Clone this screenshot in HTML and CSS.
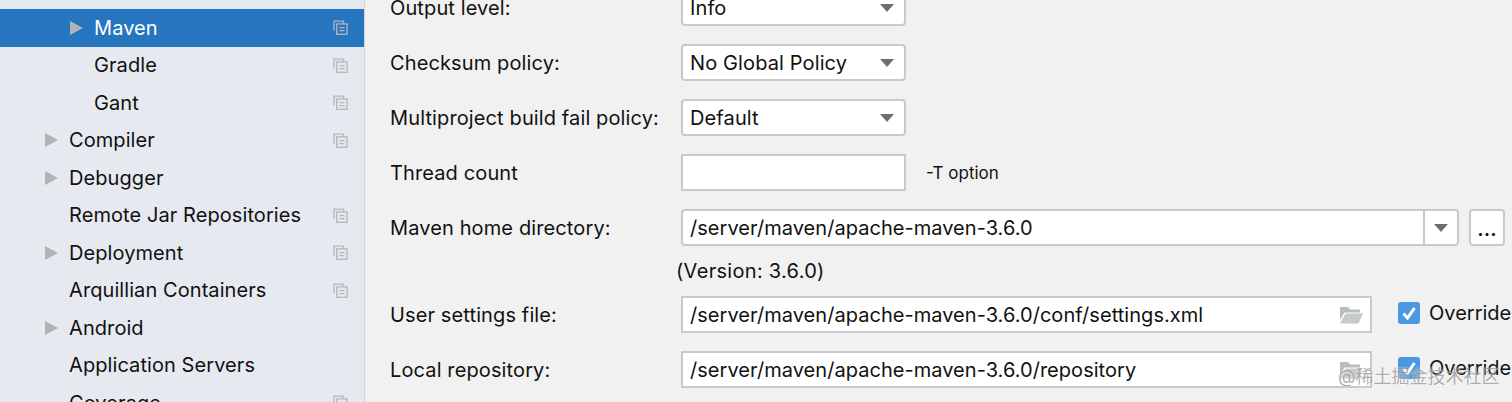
FILE: index.html
```html
<!DOCTYPE html>
<html lang="en">
<head>
<meta charset="utf-8">
<title>Maven settings</title>
<link rel="stylesheet" href="styles.css">
</head>
<body>
<svg class="defs" width="0" height="0" aria-hidden="true">
  <symbol id="copy" viewBox="0 0 15 15">
    <path d="M1 10.5V1.2h9.5V3.5" fill="none" stroke="currentColor" stroke-width="1.3"/>
    <rect x="3.7" y="3.9" width="10.4" height="10.4" fill="none" stroke="currentColor" stroke-width="1.3"/>
    <path d="M6.3 7.6h5.2M6.3 10.6h5.2" stroke="currentColor" stroke-width="1.3"/>
  </symbol>
  <symbol id="folder" viewBox="0 0 24 18">
    <path d="M1 1h8l2 2.5h10v3H5.5L1 14z" fill="#b9bdbd"/>
    <path d="M6.5 7.5H24L19.5 17.5H1z" fill="#c6caca"/>
  </symbol>
</svg>
<div class="app">
  <aside class="sidebar">
    <ul class="tree">
      <li class="row selected lvl2"><i class="arrow"></i><span class="name">Maven</span><svg class="copy"><use href="#copy"/></svg></li>
      <li class="row lvl2"><span class="name">Gradle</span><svg class="copy"><use href="#copy"/></svg></li>
      <li class="row lvl2"><span class="name">Gant</span><svg class="copy"><use href="#copy"/></svg></li>
      <li class="row"><i class="arrow"></i><span class="name">Compiler</span><svg class="copy"><use href="#copy"/></svg></li>
      <li class="row"><i class="arrow"></i><span class="name">Debugger</span></li>
      <li class="row"><span class="name">Remote Jar Repositories</span><svg class="copy"><use href="#copy"/></svg></li>
      <li class="row"><i class="arrow"></i><span class="name">Deployment</span><svg class="copy"><use href="#copy"/></svg></li>
      <li class="row"><span class="name">Arquillian Containers</span><svg class="copy"><use href="#copy"/></svg></li>
      <li class="row"><i class="arrow"></i><span class="name">Android</span></li>
      <li class="row"><span class="name">Application Servers</span></li>
      <li class="row"><span class="name">Coverage</span><svg class="copy"><use href="#copy"/></svg></li>
    </ul>
  </aside>
  <main class="form">
    <div class="field">
      <label class="label">Output level:</label>
      <div class="select"><span>Info</span><i class="caret"></i></div>
    </div>
    <div class="field">
      <label class="label">Checksum policy:</label>
      <div class="select"><span>No Global Policy</span><i class="caret"></i></div>
    </div>
    <div class="field">
      <label class="label">Multiproject build fail policy:</label>
      <div class="select"><span>Default</span><i class="caret"></i></div>
    </div>
    <div class="field">
      <label class="label">Thread count</label>
      <div class="input short"></div>
      <span class="hint">-T option</span>
    </div>
    <div class="field">
      <label class="label">Maven home directory:</label>
      <div class="combo"><span class="combo-text path">/server/maven/apache-maven-3.6.0</span><span class="combo-btn"><i class="caret"></i></span></div>
      <div class="more">...</div>
    </div>
    <div class="version">(Version: 3.6.0)</div>
    <div class="field">
      <label class="label">User settings file:</label>
      <div class="input wide"><span class="path">/server/maven/apache-maven-3.6.0/conf/settings.xml</span><svg class="folder"><use href="#folder"/></svg></div>
      <span class="check"><svg viewBox="0 0 22 22"><path d="M5.5 11.5l4 4.5 7-10" fill="none" stroke="#fff" stroke-width="3"/></svg></span>
      <span class="override">Override</span>
    </div>
    <div class="field">
      <label class="label">Local repository:</label>
      <div class="input wide"><span class="path">/server/maven/apache-maven-3.6.0/repository</span><svg class="folder"><use href="#folder"/></svg></div>
      <span class="check"><svg viewBox="0 0 22 22"><path d="M5.5 11.5l4 4.5 7-10" fill="none" stroke="#fff" stroke-width="3"/></svg></span>
      <span class="override">Override</span>
    </div>
  </main>
</div>
<div class="watermark">@稀土掘金技术社区</div>
</body>
</html>
```
FILE: styles.css
```css
* { box-sizing: border-box; }
html, body { margin: 0; height: 402px; overflow: hidden; }
body {
  background: #f1f1f1;
  color: #111;
  font-family: "Inter", "Liberation Sans", "Noto Sans CJK SC", sans-serif;
  font-size: 20px;
  position: relative;
}
.defs { position: absolute; }
.app { display: flex; height: 402px; }
.sidebar {
  width: 365px;
  flex: none;
  background: #e6e9f0;
  border-right: 1px solid #d4d4d4;
  padding-top: 9px;
}
.tree { list-style: none; margin: 0; padding: 0; }
.row {
  height: 37.5px;
  display: flex;
  align-items: center;
  padding-left: 69px;
  position: relative;
  letter-spacing: 0.08px;
}
.lvl2 { padding-left: 94px; }
.row.selected { background: #2675bf; color: #fff; }
.arrow {
  position: absolute;
  margin-left: -24px;
  width: 0;
  height: 0;
  border-left: 13px solid #b1b3b5;
  border-top: 7px solid transparent;
  border-bottom: 7px solid transparent;
}
.copy {
  position: absolute;
  left: 333px;
  width: 15px;
  height: 15px;
  color: #b5b7ba;
}
.form {
  flex: 1;
  margin-top: -11px;
  padding-left: 25px;
  display: flex;
  flex-direction: column;
  gap: 18px;
  letter-spacing: 0.12px;
}
.field { display: flex; align-items: center; height: 37px; flex: none; }
.label { width: 291px; flex: none; }
.select, .input, .combo, .more {
  background: #fff;
  border: 2px solid #c9c9c9;
  height: 37px;
  display: flex;
  align-items: center;
}
.select {
  width: 225px;
  border-radius: 4px;
  padding: 0 9px 0 7px;
  justify-content: space-between;
}
.caret {
  width: 0;
  height: 0;
  border-top: 8px solid #6f6f6f;
  border-left: 7px solid transparent;
  border-right: 7px solid transparent;
  margin-right: 1px;
}
.input { padding: 0 7px; justify-content: space-between; }
.short { width: 225px; }
.wide { width: 691px; padding-right: 7px; }
.path { letter-spacing: 0.04px; }
.hint { margin-left: 20px; font-size: 17px; letter-spacing: 0; }
.combo { width: 778px; border-radius: 4px; }
.combo-text { flex: 1; padding-left: 7px; }
.combo-btn {
  width: 34px;
  height: 100%;
  border-left: 2px solid #c9c9c9;
  display: flex;
  align-items: center;
  justify-content: center;
}
.more {
  width: 36px;
  margin-left: 10px;
  border-radius: 4px;
  justify-content: center;
  font-weight: 600;
  padding-top: 3px;
}
.version { height: 14px; margin-left: 286px; display: flex; align-items: center; flex: none; letter-spacing: 0.3px; }
.folder { width: 24px; height: 18px; }
.check {
  width: 22px;
  height: 22px;
  margin: 0 0 4px 26px;
  border-radius: 3px;
  background: #4a98e0;
  flex: none;
  display: block;
}
.check svg { display: block; width: 22px; height: 22px; }
.override { margin: 0 0 4px 9px; white-space: nowrap; letter-spacing: 0; }
.watermark {
  position: absolute;
  left: 1338px;
  top: 366px;
  font-size: 18px;
  line-height: 22px;
  color: rgba(130, 130, 130, 0.65);
  text-shadow: 0 0 2px rgba(255, 255, 255, 0.8);
  white-space: nowrap;
}
```
